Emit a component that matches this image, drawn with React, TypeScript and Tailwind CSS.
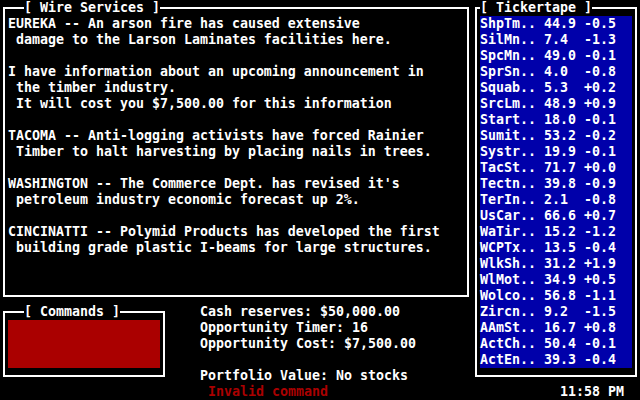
const wireLines = [
  'EUREKA -- An arson fire has caused extensive',
  ' damage to the Larson Laminates facilities here.',
  '',
  'I have information about an upcoming announcement in',
  ' the timber industry.',
  ' It will cost you $7,500.00 for this information',
  '',
  'TACOMA -- Anti-logging activists have forced Rainier',
  ' Timber to halt harvesting by placing nails in trees.',
  '',
  "WASHINGTON -- The Commerce Dept. has revised it's",
  ' petroleum industry economic forecast up 2%.',
  '',
  'CINCINATTI -- Polymid Products has developed the first',
  ' building grade plastic I-beams for large structures.',
]

const ticker: [string, string, string][] = [
  ['ShpTm', '44.9', '-0.5'],
  ['SilMn', '7.4', '-1.3'],
  ['SpcMn', '49.0', '-0.1'],
  ['SprSn', '4.0', '-0.8'],
  ['Squab', '5.3', '+0.2'],
  ['SrcLm', '48.9', '+0.9'],
  ['Start', '18.0', '-0.1'],
  ['Sumit', '53.2', '-0.2'],
  ['Systr', '19.9', '-0.1'],
  ['TacSt', '71.7', '+0.0'],
  ['Tectn', '39.8', '-0.9'],
  ['TerIn', '2.1', '-0.8'],
  ['UsCar', '66.6', '+0.7'],
  ['WaTir', '15.2', '-1.2'],
  ['WCPTx', '13.5', '-0.4'],
  ['WlkSh', '31.2', '+1.9'],
  ['WlMot', '34.9', '+0.5'],
  ['Wolco', '56.8', '-1.1'],
  ['Zircn', '9.2', '-1.5'],
  ['AAmSt', '16.7', '+0.8'],
  ['ActCh', '50.4', '-0.1'],
  ['ActEn', '39.3', '-0.4'],
]

// one text cell row: 16px tall, 8px per char
function Line({ children, className = '' }: { children?: React.ReactNode; className?: string }) {
  return <div className={`h-4 leading-4 whitespace-pre ${className}`}>{children}</div>
}

function Title({ text, left }: { text: string; left: string }) {
  return <div className={`absolute top-0 h-4 leading-4 whitespace-pre bg-black ${left}`}>{text}</div>
}

export default function App() {
  return (
    <div className="w-[640px] h-[400px] bg-black text-white overflow-hidden flex font-['DejaVu_Sans_Mono','Liberation_Mono',monospace] text-[13.29px] font-bold">
      {/* left side: wire services + commands/status */}
      <div className="w-[472px] flex flex-col">
        <div className="relative w-[472px] h-[304px] px-[3px] py-[7px]">
          <div className="h-full border-2 border-white pt-[7px] px-[3px]">
            {wireLines.map((l, i) => <Line key={i}>{l}</Line>)}
          </div>
          <Title text="[ Wire Services ]" left="left-[24px]" />
        </div>

        <div className="h-[96px] flex">
          <div className="relative w-[168px] h-[80px] px-[3px] py-[7px]">
            <div className="h-full border-2 border-white pt-[7px] px-[3px]">
              <div className="h-[48px] bg-[#aa0000]" />
            </div>
            <Title text="[ Commands ]" left="left-[24px]" />
          </div>
          <div className="ml-[32px] flex flex-col">
            <Line>Cash reserves: $50,000.00</Line>
            <Line>Opportunity Timer: 16</Line>
            <Line>Opportunity Cost: $7,500.00</Line>
            <Line />
            <Line>Portfolio Value: No stocks</Line>
            <Line className="text-[#aa0000]"> Invalid command</Line>
          </div>
        </div>
      </div>

      {/* right side: tickertape */}
      <div className="w-[168px] flex flex-col">
        <div className="relative w-[168px] h-[384px] px-[3px] py-[7px]">
          <div className="h-full border-2 border-white pt-[7px] px-[3px]">
            <div className="h-[352px] bg-[#0000aa]">
              {ticker.map(([n, p, c]) => (
                <Line key={n}>{`${n}.. ${p.padEnd(4)} ${c}`}</Line>
              ))}
            </div>
          </div>
          <Title text="[ Tickertape ]" left="left-[8px]" />
        </div>
        <Line className="pl-[88px]">11:58 PM</Line>
      </div>
    </div>
  )
}
